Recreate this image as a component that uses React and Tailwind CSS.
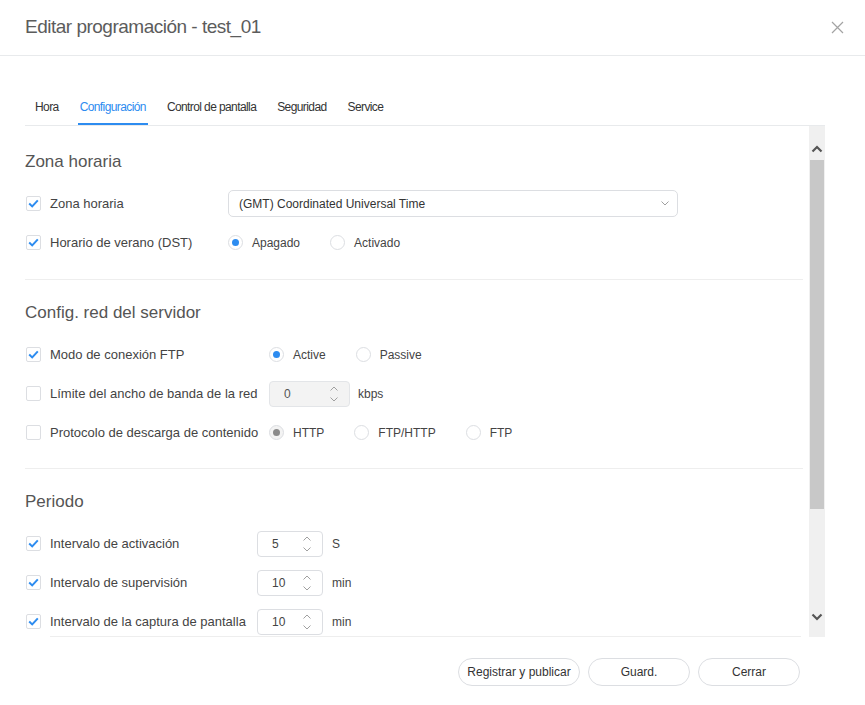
import React from "react";

function Check({ on }) {
  return (
    <span className="flex h-[15px] w-[15px] shrink-0 items-center justify-center rounded-[2px] border border-[#dcdee2] bg-white">
      {on && (
        <svg width="11" height="9" viewBox="0 0 11 9">
          <path d="M1.2 4.6 L4.2 7.4 L9.8 1.4" fill="none" stroke="#2d8cf0" strokeWidth="2" />
        </svg>
      )}
    </span>
  );
}

function Radio({ on, disabled, label }) {
  return (
    <label className="flex items-center gap-[9px] text-[12px]">
      <span
        className={
          "flex h-[15px] w-[15px] shrink-0 items-center justify-center rounded-full border border-[#dcdee2] " +
          (disabled && on ? "bg-[#f3f3f3]" : "bg-white")
        }
      >
        {on && (
          <span className={"h-[7px] w-[7px] rounded-full " + (disabled ? "bg-[#8a8a8a]" : "bg-[#2d8cf0]")} />
        )}
      </span>
      <span className="whitespace-nowrap">{label}</span>
    </label>
  );
}

function Chevron({ up }) {
  return (
    <svg width="8" height="5" viewBox="0 0 8 5">
      <path
        d={up ? "M0.5 4.5 L4 1 L7.5 4.5" : "M0.5 0.5 L4 4 L7.5 0.5"}
        fill="none"
        stroke="#a0a0a0"
        strokeWidth="1"
      />
    </svg>
  );
}

function NumInput({ value, className, disabled }) {
  return (
    <div
      className={
        "flex h-[26px] shrink-0 items-center justify-between rounded-[4px] border pl-[14px] pr-[11px] text-[12px] " +
        (disabled ? "border-[#e3e5e8] bg-[#f3f3f3] text-[#555]" : "border-[#dcdee2] bg-white text-[#444]") +
        " " +
        className
      }
    >
      <span>{value}</span>
      <span className="flex flex-col items-center gap-[6px]">
        <Chevron up />
        <Chevron />
      </span>
    </div>
  );
}

function Row({ checked, label, labelW, children }) {
  return (
    <div className="flex h-[39px] items-center">
      <div className={"flex shrink-0 items-center " + labelW}>
        <span className="ml-[1px]">
          <Check on={checked} />
        </span>
        <span className="ml-[9px] whitespace-nowrap">{label}</span>
      </div>
      <div className="flex items-center text-[12px]">{children}</div>
    </div>
  );
}

export default function App() {
  const tabs = ["Hora", "Configuración", "Control de pantalla", "Seguridad", "Service"];

  return (
    <div className="flex h-[705px] w-full flex-col bg-white font-['Liberation_Sans',Arial,sans-serif] text-[13px] text-[#444]">
      {/* header */}
      <div className="flex h-[56px] shrink-0 items-center justify-between border-b border-[#e8eaec] pl-[25px] pr-[21px]">
        <h1 className="text-[19px] tracking-[-0.5px] text-[#5c5c5c]">Editar programación - test_01</h1>
        <svg width="13" height="13" viewBox="0 0 13 13">
          <path d="M1 1 L12 12 M12 1 L1 12" stroke="#a3a3a3" strokeWidth="1.2" />
        </svg>
      </div>

      <div className="ml-[25px] mt-[32px] flex w-[800px] flex-col">
        {/* tabs */}
        <div className="flex gap-[17px] border-b border-[#e8eaec] pl-[8px] text-[12px] tracking-[-0.6px]">
          {tabs.map((t, i) => (
            <div
              key={t}
              className={
                "flex h-[37px] items-center border-b-2 px-[2px] pt-[3px] " +
                (i === 1 ? "border-[#2d8cf0] text-[#2d8cf0]" : "border-transparent text-[#333]")
              }
            >
              {t}
            </div>
          ))}
        </div>

        {/* scroll area */}
        <div className="flex h-[511px]">
          <div className="flex flex-1 flex-col">
            <div className="flex-1 overflow-hidden pr-[6px]">
              <section className="border-b border-[#eeeeee] pb-[17px] pt-[24px]">
                <h2 className="h-[24px] text-[17px] leading-[24px] text-[#555]">Zona horaria</h2>
                <div className="mt-[10px]">
                  <Row checked label="Zona horaria" labelW="w-[203px]">
                    <div className="flex h-[27px] w-[450px] items-center justify-between rounded-[5px] border border-[#dcdee2] pl-[10px] pr-[8px] text-[#333]">
                      <span>(GMT) Coordinated Universal Time</span>
                      <Chevron />
                    </div>
                  </Row>
                  <Row checked label="Horario de verano (DST)" labelW="w-[203px]">
                    <div className="flex gap-[30px]">
                      <Radio on label="Apagado" />
                      <Radio label="Activado" />
                    </div>
                  </Row>
                </div>
              </section>

              <section className="border-b border-[#eeeeee] pb-[16px] pt-[21px]">
                <h2 className="h-[24px] text-[17px] leading-[24px] text-[#555]">Config. red del servidor</h2>
                <div className="mt-[10px]">
                  <Row checked label="Modo de conexión FTP" labelW="w-[244px]">
                    <div className="flex gap-[30px]">
                      <Radio on label="Active" />
                      <Radio label="Passive" />
                    </div>
                  </Row>
                  <Row label="Límite del ancho de banda de la red" labelW="w-[244px]">
                    <NumInput value="0" disabled className="w-[81px]" />
                    <span className="ml-[8px]">kbps</span>
                  </Row>
                  <Row label="Protocolo de descarga de contenido" labelW="w-[244px]">
                    <div className="flex gap-[30px]">
                      <Radio on disabled label="HTTP" />
                      <Radio label="FTP/HTTP" />
                      <Radio label="FTP" />
                    </div>
                  </Row>
                </div>
              </section>

              <section className="pt-[21px]">
                <h2 className="h-[24px] text-[17px] leading-[24px] text-[#555]">Periodo</h2>
                <div className="mt-[10px]">
                  <Row checked label="Intervalo de activación" labelW="w-[232px]">
                    <NumInput value="5" className="w-[66px]" />
                    <span className="ml-[9px]">S</span>
                  </Row>
                  <Row checked label="Intervalo de supervisión" labelW="w-[232px]">
                    <NumInput value="10" className="w-[66px]" />
                    <span className="ml-[9px]">min</span>
                  </Row>
                  <Row checked label="Intervalo de la captura de pantalla" labelW="w-[232px]">
                    <NumInput value="10" className="w-[66px]" />
                    <span className="ml-[9px]">min</span>
                  </Row>
                </div>
              </section>
            </div>
            <div className="ml-[25px] mr-[8px] h-px bg-[#eeeeee]" />
          </div>

          {/* scrollbar */}
          <div className="flex w-[16px] flex-col bg-[#f0f0f0]">
            <div className="flex h-[34px] justify-center pt-[19px]">
              <svg width="12" height="8" viewBox="0 0 12 8">
                <path d="M1.5 6.5 L6 2 L10.5 6.5" fill="none" stroke="#555" strokeWidth="2.2" />
              </svg>
            </div>
            <div className="mx-[1px] h-[349px] bg-[#c8c8c8]" />
            <div className="flex-1" />
            <div className="flex h-[28px] justify-center pt-[4px]">
              <svg width="12" height="8" viewBox="0 0 12 8">
                <path d="M1.5 1.5 L6 6 L10.5 1.5" fill="none" stroke="#555" strokeWidth="2.2" />
              </svg>
            </div>
          </div>
        </div>
      </div>

      {/* footer */}
      <div className="mt-[21px] flex justify-end gap-[8px] pr-[65px] text-[12px] text-[#333]">
        <button className="h-[28px] w-[122px] rounded-full border border-[#dcdee2] bg-white">Registrar y publicar</button>
        <button className="h-[28px] w-[102px] rounded-full border border-[#dcdee2] bg-white">Guard.</button>
        <button className="h-[28px] w-[102px] rounded-full border border-[#dcdee2] bg-white">Cerrar</button>
      </div>
    </div>
  );
}
